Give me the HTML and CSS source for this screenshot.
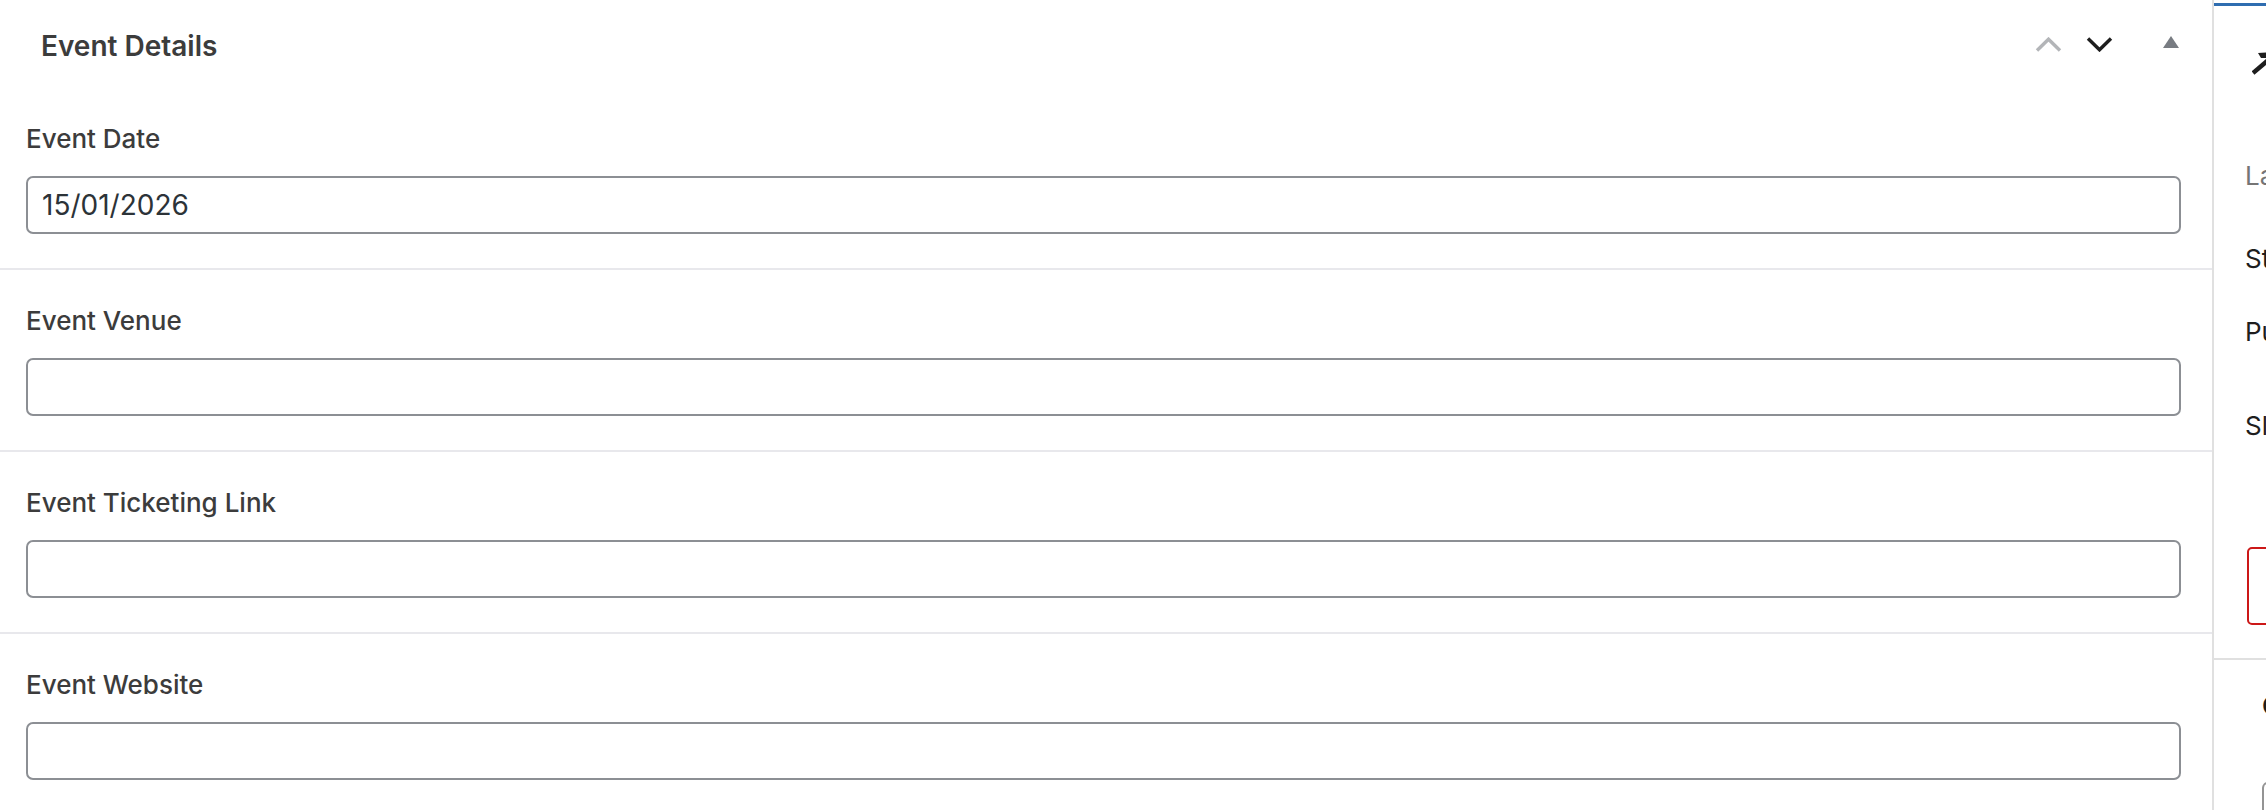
FILE: index.html
```html
<!DOCTYPE html>
<html lang="en">
<head>
<meta charset="utf-8">
<title>Event Details</title>
<link rel="stylesheet" href="styles.css">
</head>
<body>
<div class="page">
  <main class="metabox">
    <div class="mb-header">
      <h2 class="mb-title">Event Details</h2>
      <div class="mb-controls">
        <svg class="ic ic-up" width="27" height="15" viewBox="0 0 27 15"><polyline points="2,13.5 13.5,2.2 25,13.5" fill="none" stroke="currentColor" stroke-width="3.4"/></svg>
        <svg class="ic ic-down" width="27" height="15" viewBox="0 0 27 15"><polyline points="2,1.5 13.5,12.8 25,1.5" fill="none" stroke="currentColor" stroke-width="3.4"/></svg>
        <svg class="ic ic-toggle" width="16" height="12" viewBox="0 0 16 12"><polygon points="0,12 8,0 16,12" fill="currentColor"/></svg>
      </div>
    </div>
    <div class="field">
      <label class="field-label" for="ev-date">Event Date</label>
      <input class="field-input" id="ev-date" type="text" value="15/01/2026">
    </div>
    <div class="field">
      <label class="field-label" for="ev-venue">Event Venue</label>
      <input class="field-input" id="ev-venue" type="text" value="">
    </div>
    <div class="field">
      <label class="field-label" for="ev-ticket">Event Ticketing Link</label>
      <input class="field-input" id="ev-ticket" type="text" value="">
    </div>
    <div class="field">
      <label class="field-label" for="ev-web">Event Website</label>
      <input class="field-input" id="ev-web" type="text" value="">
    </div>
  </main>
  <aside class="sidebar">
    <div class="tab-indicator"></div>
    <div class="sb-icon-row">
      <svg class="sb-icon" width="30" height="24" viewBox="0 0 30 24"><path d="M1 21 L20 5" stroke="currentColor" stroke-width="4.5" fill="none"/><polygon points="6,1 27,0 25,20 21,16 22,6 9,6" fill="currentColor"/></svg>
    </div>
    <div class="sb-row sb-muted sb-last">Last edited 2 minutes ago.</div>
    <div class="sb-row sb-status">Status</div>
    <div class="sb-row sb-publish">Publish</div>
    <div class="sb-row sb-slug">Slug</div>
    <div class="sb-trash">Move to trash</div>
    <div class="sb-divider"></div>
    <div class="sb-row sb-panel-title">Categories</div>
    <div class="sb-box"></div>
  </aside>
</div>
</body>
</html>
```
FILE: styles.css
```css
html, body {
  margin: 0;
  padding: 0;
  background: #ffffff;
}

body {
  width: 2266px;
  height: 810px;
  overflow: hidden;
  font-family: Inter, "Noto Sans", "Liberation Sans", sans-serif;
  color: #1e1e1e;
}

.page {
  display: flex;
  width: 2266px;
  height: 810px;
}

/* ---------- main meta box ---------- */
.metabox {
  width: 2212px;
  flex: 0 0 2212px;
}

.mb-header {
  height: 88px;
  display: flex;
  align-items: center;
  padding: 0 33px 0 41px;
  box-sizing: border-box;
}

.mb-title {
  flex: 1;
  margin: 0;
  padding-top: 3px;
  font-size: 28px;
  line-height: 40px;
  font-weight: 600;
  color: #3c3c3c;
}

.mb-controls {
  display: flex;
  align-items: center;
}

.ic {
  display: block;
}

.ic-up {
  color: #b3b5b8;
}

.ic-down {
  color: #1e1e1e;
  margin-left: 24px;
}

.ic-toggle {
  color: #787c82;
  margin-left: 50px;
  margin-bottom: 5px;
}

.field {
  padding: 33px 31px 34px 26px;
  border-bottom: 2px solid #e8e8ec;
}

.field-label {
  display: block;
  font-size: 26px;
  line-height: 36px;
  font-weight: 500;
  color: #3c3c3c;
  margin-bottom: 19px;
}

.field-input {
  display: block;
  width: 100%;
  box-sizing: border-box;
  height: 58px;
  margin: 0;
  padding: 0 14px;
  border: 2px solid #8c8f94;
  border-radius: 7px;
  background: #ffffff;
  font-family: Inter, "Noto Sans", "Liberation Sans", sans-serif;
  font-size: 28px;
  color: #2c3338;
  outline: none;
}

/* ---------- sidebar ---------- */
.sidebar {
  flex: 1;
  min-width: 0;
  border-left: 2px solid #e0e0e0;
  overflow: hidden;
  display: flex;
  flex-direction: column;
}

.tab-indicator {
  margin-top: 3px;
  height: 3px;
  background: #2f6db0;
  flex: none;
}

.sb-icon-row {
  margin-top: 46px;
  height: 24px;
  padding-left: 38px;
  flex: none;
}

.sb-icon {
  display: block;
  color: #1e1e1e;
}

.sb-row {
  flex: none;
  padding-left: 31px;
  font-size: 26px;
  line-height: 36px;
  white-space: nowrap;
  color: #1e1e1e;
}

.sb-muted {
  color: #757575;
}

.sb-last {
  margin-top: 82px;
}

.sb-status {
  margin-top: 47px;
}

.sb-publish {
  margin-top: 37px;
}

.sb-slug {
  margin-top: 58px;
}

.sb-trash {
  flex: none;
  margin-top: 103px;
  margin-left: 33px;
  width: 300px;
  height: 78px;
  box-sizing: border-box;
  border: 2px solid #cc1818;
  border-radius: 5px;
  color: #cc1818;
  font-size: 26px;
  line-height: 74px;
  padding-left: 30px;
  white-space: nowrap;
}

.sb-divider {
  flex: none;
  margin-top: 33px;
  height: 2px;
  background: #e0e0e0;
}

.sb-panel-title {
  margin-top: 28px;
  padding-left: 48px;
  font-weight: 600;
}

.sb-box {
  flex: none;
  margin-top: 58px;
  margin-left: 48px;
  width: 300px;
  height: 80px;
  border: 2px solid #949494;
  border-radius: 6px;
}
```
